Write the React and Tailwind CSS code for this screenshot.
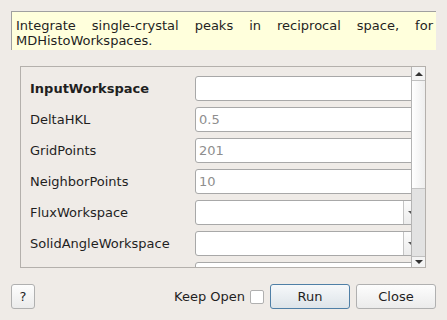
import React from 'react';

const rows = [
  { label: 'InputWorkspace', bold: true, kind: 'text', value: '' },
  { label: 'DeltaHKL', kind: 'text', value: '0.5' },
  { label: 'GridPoints', kind: 'text', value: '201' },
  { label: 'NeighborPoints', kind: 'text', value: '10' },
  { label: 'FluxWorkspace', kind: 'combo' },
  { label: 'SolidAngleWorkspace', kind: 'combo' },
  { label: '', kind: 'text', value: '' },
];

const Field = ({ row }) => {
  if (row.kind === 'combo') {
    return (
      <div className="flex h-[25px] w-[225px] shrink-0 rounded-[3px] border border-[#a8a8a8] bg-white">
        <div className="w-[208px]" />
        <div className="flex w-[16px] items-center border-l border-[#c4c4c4] bg-gradient-to-b from-[#fbfbfb] to-[#ececec] pl-[4px]">
          <span className="block h-0 w-0 border-x-[3px] border-t-[3px] border-x-transparent border-t-[#555]" />
        </div>
      </div>
    );
  }
  return (
    <div className="flex h-[25px] w-[225px] shrink-0 items-center rounded-[3px] border border-[#a8a8a8] bg-white pl-[3px] text-[13px] text-[#8e8e8e]">
      {row.value}
    </div>
  );
};

const App = () => {
  return (
    <div
      className="flex h-[320px] w-[447px] flex-col overflow-hidden bg-[#efebe7] text-[13px] text-[#1f1f1f]"
      style={{ fontFamily: '"DejaVu Sans", "Liberation Sans", sans-serif' }}
    >
      {/* Description */}
      <div className="mx-[11px] mt-[11px] h-[39px] border-l border-t border-[#a0a0a0] bg-[#ffffdc] pl-[4px] pr-[3px] pt-[6px] text-justify leading-[15px]">
        Integrate single-crystal peaks in reciprocal space, for MDHistoWorkspaces.
      </div>

      {/* Properties */}
      <div className="ml-[20px] mr-[21px] mt-[16px] flex h-[202px] border border-[#b4b0ac]">
        <div className="flex flex-1 flex-col gap-[6px] overflow-hidden pt-[9px]">
          {rows.map((row, i) => (
            <div key={i} className="flex items-center">
              <div className={`w-[174px] shrink-0 pl-[9px] ${row.bold ? 'font-bold' : ''}`}>{row.label}</div>
              <Field row={row} />
            </div>
          ))}
        </div>
        <div className="flex w-[14px] shrink-0 flex-col border-l border-[#b4b4b4]">
          <div className="flex h-[14px] items-center justify-center border-b border-[#c0c0c0] bg-[#f4f4f4]">
            <span className="block h-0 w-0 border-x-[4px] border-b-[4px] border-x-transparent border-b-[#333]" />
          </div>
          <div className="h-[108px] border-b border-[#c4c4c4] bg-gradient-to-r from-[#ffffff] to-[#eeeeee]" />
          <div className="flex-1 bg-[#e2e2e2]" />
          <div className="flex h-[11px] items-center justify-center border-t border-[#c0c0c0] bg-[#f4f4f4]">
            <span className="block h-0 w-0 border-x-[4px] border-t-[4px] border-x-transparent border-t-[#333]" />
          </div>
        </div>
      </div>

      {/* Buttons */}
      <div className="mt-[16px] flex h-[25px] items-center px-[11px]">
        <button className="h-[25px] w-[24px] rounded-[3px] border border-[#b0b0b0] bg-gradient-to-b from-[#fdfdfd] to-[#ebebeb] text-[13px]">
          ?
        </button>
        <div className="flex-1" />
        <span>Keep Open</span>
        <span className="ml-[5px] h-[14px] w-[14px] rounded-[2px] border border-[#b0b0b0] bg-white" />
        <button className="ml-[6px] h-[25px] w-[80px] rounded-[3px] border border-[#4f7fa6] bg-gradient-to-b from-[#f6f8fa] to-[#dde4e9] text-[13px]">
          Run
        </button>
        <button className="ml-[6px] h-[25px] w-[80px] rounded-[3px] border border-[#b0b0b0] bg-gradient-to-b from-[#fdfdfd] to-[#ebebeb] text-[13px]">
          Close
        </button>
      </div>
    </div>
  );
};

export default App;
